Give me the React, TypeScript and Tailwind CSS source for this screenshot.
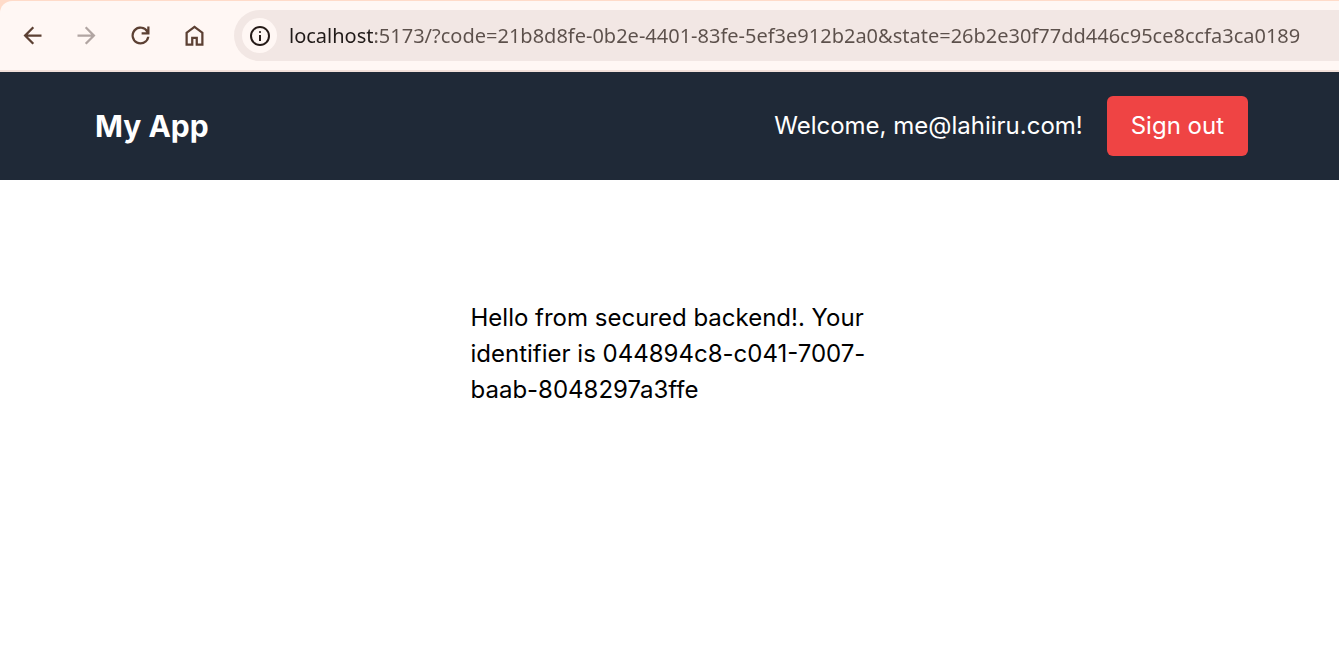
import React from "react";

const iconPaths = {
  back: "m7.825 13 5.6 5.6L12 20l-8-8 8-8 1.425 1.4-5.6 5.6H20v2H7.825Z",
  forward: "M16.175 13H4v-2h12.175l-5.6-5.6L12 4l8 8-8 8-1.425-1.4 5.6-5.6Z",
  reload:
    "M12 20a8 8 0 1 1 6-13.29V4h2v7h-7V9h4.2A6 6 0 1 0 17.92 13h2.02A8 8 0 0 1 12 20Z",
  home: "M6 19h3v-6h6v6h3v-9l-6-4.5L6 10v9Zm-2 2V9l8-6 8 6v12h-7v-6h-2v6H4Z",
  info: "M11 17h2v-6h-2v6Zm1-8q.425 0 .713-.288T13 8t-.288-.713T12 7t-.713.288T11 8t.288.713T12 9Zm0 13q-2.075 0-3.9-.788t-3.175-2.137T2.788 15.9 2 12t.788-3.9 2.137-3.175T8.1 2.788 12 2t3.9.788 3.175 2.137T21.213 8.1 22 12t-.788 3.9-2.137 3.175-3.175 2.138T12 22Zm0-2q3.35 0 5.675-2.325T20 12t-2.325-5.675T12 4 6.325 6.325 4 12t2.325 5.675T12 20Z",
};

function Icon({ name, className }: { name: keyof typeof iconPaths; className: string }) {
  return (
    <svg viewBox="0 0 24 24" fill="currentColor" aria-hidden="true" className={className}>
      <path d={iconPaths[name]} />
    </svg>
  );
}

function ToolButton({
  name,
  label,
  disabled = false,
}: {
  name: keyof typeof iconPaths;
  label: string;
  disabled?: boolean;
}) {
  return (
    <button type="button" aria-label={label} disabled={disabled} className="text-[#5c4033] disabled:text-[#b1a5a2]">
      <Icon name={name} className="size-[27px]" />
    </button>
  );
}

function BrowserBar() {
  return (
    <div className="bg-[#ffdbc9] pt-px">
      <div className="flex items-center rounded-tl-xl border-b-2 border-[#f1e0da] bg-[#fff7f4] py-[9px] pl-[19px]">
        <nav aria-label="Browser" className="flex shrink-0 items-center gap-[27px]">
          <ToolButton name="back" label="Back" />
          <ToolButton name="forward" label="Forward" disabled />
          <ToolButton name="reload" label="Reload" />
          <ToolButton name="home" label="Home" />
        </nav>
        <div className="ml-[26px] flex h-[51px] min-w-0 flex-1 items-center rounded-l-full bg-[#f2e7e4] pl-2">
          <button
            type="button"
            aria-label="View site information"
            className="flex size-[35px] shrink-0 items-center justify-center rounded-full bg-[#fff7f4] text-[#251a17]"
          >
            <Icon name="info" className="size-6" />
          </button>
          <input
            type="text"
            aria-label="Address"
            defaultValue="localhost:5173/?code=21b8d8fe-0b2e-4401-83fe-5ef3e912b2a0&state=26b2e30f77dd446c95ce8ccfa3ca0189"
            className="ml-3 h-9 min-w-0 flex-1 bg-linear-to-r from-[#201a18] from-[84px] to-[#5c504b] to-[84px] bg-clip-text font-['Noto_Sans',sans-serif] text-[20px] text-transparent outline-none"
          />
        </div>
      </div>
    </div>
  );
}

export default function App() {
  return (
    <div className="min-h-screen bg-white font-['Inter',sans-serif] text-2xl leading-9 text-black">
      <BrowserBar />
      <header className="flex items-center justify-between bg-[#1f2937] py-6 pr-[91px] pl-[95px] text-white">
        <h1 className="text-[30px] font-bold">My App</h1>
        <div className="flex items-center gap-6">
          <span>Welcome, me@lahiiru.com!</span>
          <button type="button" className="rounded-md bg-[#ef4444] px-6 py-3">
            Sign out
          </button>
        </div>
      </header>
      <main className="flex justify-center px-6 pt-30">
        <p className="w-full max-w-[398px]">
          Hello from secured backend!. Your identifier is 044894c8-c041-7007-baab-8048297a3ffe
        </p>
      </main>
    </div>
  );
}
